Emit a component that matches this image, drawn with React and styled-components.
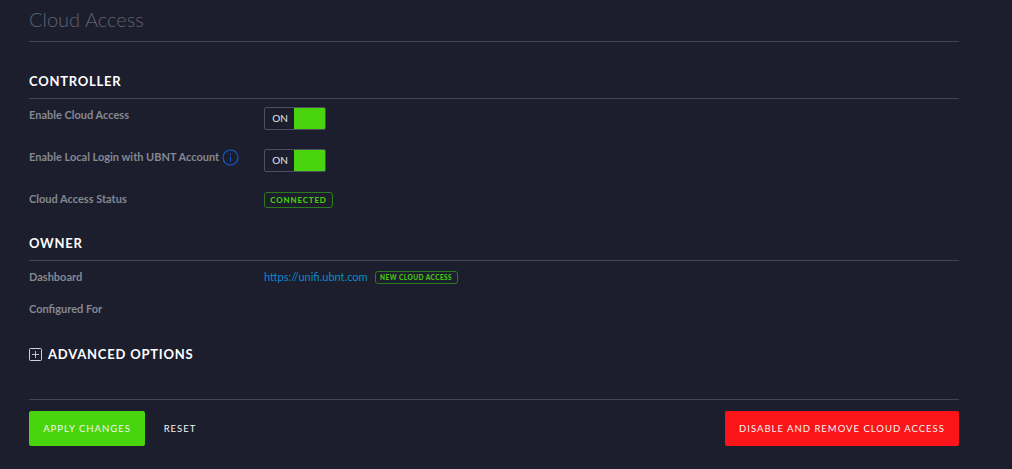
import React from "react";
import styled, { createGlobalStyle } from "styled-components";

const Global = createGlobalStyle`
  html, body { margin: 0; padding: 0; background: #1c1e2d; }
  body { font-family: Lato, "Open Sans", sans-serif; -webkit-font-smoothing: antialiased; }
`;

const Page = styled.div`
  width: 1012px;
  height: 469px;
  box-sizing: border-box;
  padding: 0 53px 0 29px;
  overflow: hidden;
  background: #1c1e2d;
  display: flex;
  flex-direction: column;
`;

const Title = styled.h1`
  margin: 0;
  height: 41px;
  flex: none;
  border-bottom: 1px solid #41454f;
  font-size: 20px;
  line-height: 39px;
  font-weight: 300;
  color: #5d626c;
`;

const SectionHead = styled.h2`
  margin: ${(p) => p.$top}px 0 0;
  height: 26px;
  flex: none;
  border-bottom: 1px solid #41454f;
  font-size: 13px;
  line-height: 18px;
  font-weight: 700;
  letter-spacing: 0.77px;
  color: #fff;
`;

const Row = styled.div`
  display: grid;
  grid-template-columns: 235px 1fr;
  flex: none;
  height: ${(p) => p.$h}px;
  padding-top: ${(p) => p.$pad}px;
  box-sizing: border-box;
`;

const Label = styled.div`
  display: flex;
  align-items: flex-start;
  font-size: 11px;
  font-weight: 700;
  line-height: 16px;
  color: #858891;
`;

const Value = styled.div`
  display: flex;
  align-items: flex-start;
  gap: 7px;
`;

const Info = styled.svg`
  width: 17px;
  height: 17px;
  margin: 0 0 0 3px;
`;

const Toggle = styled.div`
  display: flex;
  width: 62px;
  height: 23px;
  box-sizing: border-box;
  border-radius: 2px;
  overflow: hidden;
  border: 1px solid #4c505b;
`;

const ToggleText = styled.span`
  width: 29px;
  box-sizing: border-box;
  padding-left: 1px;
  font-size: 10px;
  line-height: 21px;
  text-align: center;
  color: #e4e5e7;
`;

const ToggleFill = styled.span`
  flex: 1;
  margin: -1px -1px -1px 0;
  background: #48d50d;
`;

const Tag = styled.span`
  display: inline-flex;
  align-items: center;
  justify-content: center;
  box-sizing: border-box;
  margin-top: ${(p) => p.$mt}px;
  padding-bottom: 1px;
  height: ${(p) => p.$h}px;
  width: ${(p) => p.$w}px;
  border: 1px solid #2b7a1c;
  border-radius: 3px;
  font-size: ${(p) => p.$size}px;
  font-weight: 900;
  letter-spacing: ${(p) => p.$track}px;
  color: #48c70e;
`;

const Link = styled.a`
  font-size: 11px;
  line-height: 16px;
  color: #0b8aca;
  text-decoration: none;
`;

const Advanced = styled.div`
  display: flex;
  align-items: center;
  gap: 6px;
  flex: none;
  margin-top: 17px;
  height: 24px;
  font-size: 13px;
  font-weight: 700;
  letter-spacing: 0.79px;
  color: #fff;
`;

const PlusBox = styled.svg`
  width: 13px;
  height: 13px;
`;

const Footer = styled.div`
  display: flex;
  align-items: center;
  flex: none;
  margin-top: 33px;
  padding-top: 11px;
  border-top: 1px solid #41454f;
`;

const Button = styled.button`
  height: 35px;
  width: ${(p) => p.$w}px;
  padding: 0;
  border: 0;
  border-radius: 2px;
  background: ${(p) => p.$bg};
  color: #f4f4f4;
  font-family: inherit;
  font-size: 9.5px;
  letter-spacing: 1px;
`;

const TextButton = styled(Button)`
  background: transparent;
  margin-left: 9px;
  width: 52px;
`;

const Spacer = styled.div`
  flex: 1;
`;

const InfoIcon = () => (
  <Info viewBox="0 0 17 17" fill="none">
    <circle cx="8.5" cy="8.5" r="7.5" stroke="#0f5fd0" strokeWidth="1.1" />
    <path d="M8.5 7.5v5" stroke="#0f5fd0" strokeWidth="1" />
    <path d="M8.5 4.6v1.2" stroke="#0f5fd0" strokeWidth="1" />
  </Info>
);

const Switch = () => (
  <Toggle>
    <ToggleText>ON</ToggleText>
    <ToggleFill />
  </Toggle>
);

export default function App() {
  return (
    <Page>
      <Global />
      <Title>Cloud Access</Title>
      <SectionHead $top={30}>CONTROLLER</SectionHead>
      <Row $h={42} $pad={8}>
        <Label>Enable Cloud Access</Label>
        <Value><Switch /></Value>
      </Row>
      <Row $h={42} $pad={8}>
        <Label>Enable Local Login with UBNT Account<InfoIcon /></Label>
        <Value><Switch /></Value>
      </Row>
      <Row $h={35} $pad={8}>
        <Label>Cloud Access Status</Label>
        <Value><Tag $mt={1} $w={69} $h={16} $size={8} $track={0.8}>CONNECTED</Tag></Value>
      </Row>
      <SectionHead $top={16}>OWNER</SectionHead>
      <Row $h={32} $pad={8}>
        <Label>Dashboard</Label>
        <Value>
          <Link href="#">https://unifi.ubnt.com</Link>
          <Tag $mt={2} $w={83} $h={13} $size={6.5} $track={0.45}>NEW CLOUD ACCESS</Tag>
        </Value>
      </Row>
      <Row $h={32} $pad={8}>
        <Label>Configured For</Label>
      </Row>
      <Advanced>
        <PlusBox viewBox="0 0 13 13" fill="none">
          <rect x="0.5" y="0.5" width="12" height="12" rx="1" stroke="#e6e6e8" strokeWidth="0.9" />
          <path d="M6.5 3v7M3 6.5h7" stroke="#e6e6e8" strokeWidth="0.8" />
        </PlusBox>
        ADVANCED OPTIONS
      </Advanced>
      <Footer>
        <Button $w={116} $bg="#48d50d">APPLY CHANGES</Button>
        <TextButton $bg="transparent">RESET</TextButton>
        <Spacer />
        <Button $w={234} $bg="#fb1519">DISABLE AND REMOVE CLOUD ACCESS</Button>
      </Footer>
    </Page>
  );
}
